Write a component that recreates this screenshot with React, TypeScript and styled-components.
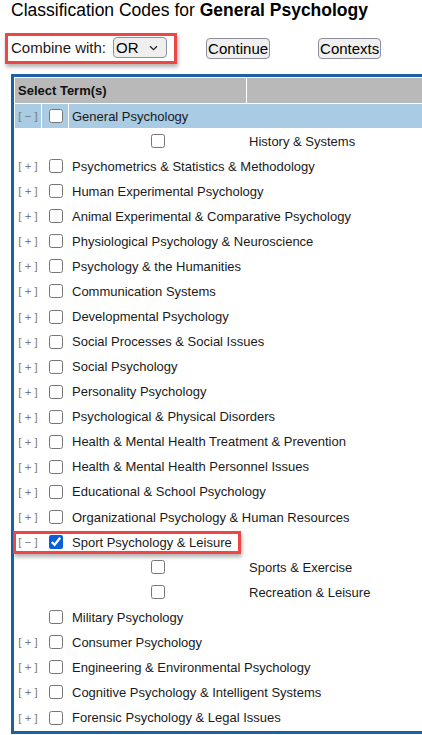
import styled, { createGlobalStyle } from "styled-components";

const GlobalStyle = createGlobalStyle`
  html, body {
    margin: 0;
    padding: 0;
    overflow: hidden;
    background: #ffffff;
  }
  body {
    font-family: "Liberation Sans", Arial, sans-serif;
    color: #000000;
  }
`;

type Term = {
  label: string;
  toggle?: "+" | "-";
  child?: boolean;
  checked?: boolean;
  current?: boolean;
  marked?: boolean;
};

const terms: Term[] = [
  { label: "General Psychology", toggle: "-", current: true },
  { label: "History & Systems", child: true },
  { label: "Psychometrics & Statistics & Methodology", toggle: "+" },
  { label: "Human Experimental Psychology", toggle: "+" },
  { label: "Animal Experimental & Comparative Psychology", toggle: "+" },
  { label: "Physiological Psychology & Neuroscience", toggle: "+" },
  { label: "Psychology & the Humanities", toggle: "+" },
  { label: "Communication Systems", toggle: "+" },
  { label: "Developmental Psychology", toggle: "+" },
  { label: "Social Processes & Social Issues", toggle: "+" },
  { label: "Social Psychology", toggle: "+" },
  { label: "Personality Psychology", toggle: "+" },
  { label: "Psychological & Physical Disorders", toggle: "+" },
  { label: "Health & Mental Health Treatment & Prevention", toggle: "+" },
  { label: "Health & Mental Health Personnel Issues", toggle: "+" },
  { label: "Educational & School Psychology", toggle: "+" },
  { label: "Organizational Psychology & Human Resources", toggle: "+" },
  { label: "Sport Psychology & Leisure", toggle: "-", checked: true, marked: true },
  { label: "Sports & Exercise", child: true },
  { label: "Recreation & Leisure", child: true },
  { label: "Military Psychology" },
  { label: "Consumer Psychology", toggle: "+" },
  { label: "Engineering & Environmental Psychology", toggle: "+" },
  { label: "Cognitive Psychology & Intelligent Systems", toggle: "+" },
  { label: "Forensic Psychology & Legal Issues", toggle: "+" },
];

export default function App() {
  return (
    <>
      <GlobalStyle />
      <Title>
        Classification Codes for <b>General Psychology</b>
      </Title>
      <Toolbar>
        <MarkBox>
          <span>Combine with:</span>
          <SelectWrap>
            <Select defaultValue="OR">
              <option value="OR">OR</option>
              <option value="AND">AND</option>
            </Select>
            <Chevron width="9" height="6" viewBox="0 0 9 6">
              <path d="M1 1.2 L4.5 4.6 L8 1.2" fill="none" stroke="#222" strokeWidth="1.3" />
            </Chevron>
          </SelectWrap>
        </MarkBox>
        <ToolButton $offset={29}>Continue</ToolButton>
        <ToolButton $offset={48}>Contexts</ToolButton>
      </Toolbar>
      <TermTable>
        <HeaderRow>
          <HeaderCell $span={3}>Select Term(s)</HeaderCell>
          <HeaderCell />
        </HeaderRow>
        {terms.map((term) => (
          <Row key={term.label}>
            {term.child ? (
              <>
                <Cell />
                <Cell />
                <Cell $center>
                  <Box type="checkbox" />
                </Cell>
                <Label $pad={2}>{term.label}</Label>
              </>
            ) : (
              <>
                <Cell $current={term.current} $center>
                  {term.toggle && (
                    <Toggle>[ {term.toggle === "+" ? "+" : "\u2212"} ]</Toggle>
                  )}
                </Cell>
                <Cell $current={term.current} $center>
                  <Box type="checkbox" defaultChecked={term.checked} />
                </Cell>
                <Label $current={term.current} $span={2} $pad={3}>
                  {term.label}
                </Label>
              </>
            )}
            {term.marked && <RowMark />}
          </Row>
        ))}
      </TermTable>
    </>
  );
}

const Title = styled.h1`
  margin: 0 0 0 11px;
  font-size: 17.5px;
  line-height: 20px;
  font-weight: 400;
  white-space: nowrap;

  b {
    font-weight: 700;
  }
`;

const Toolbar = styled.div`
  display: flex;
  align-items: center;
  margin: 13px 0 0 5px;
  font-size: 15px;
`;

const MarkBox = styled.div`
  display: inline-flex;
  align-items: center;
  gap: 7px;
  padding: 1px 7px 3px 3px;
  border: 3px solid #ee4646;
  box-shadow: 1px 3px 4px rgba(0, 0, 0, 0.3);
  color: #1a1a1a;
`;

const SelectWrap = styled.span`
  position: relative;
  display: inline-flex;
`;

const Select = styled.select`
  appearance: none;
  width: 54px;
  height: 21px;
  margin: 0;
  padding: 0 0 0 2px;
  font-family: "Liberation Sans", Arial, sans-serif;
  font-size: 15px;
  color: #000000;
  background: #efefef;
  border: 1px solid #8f8f9d;
  border-radius: 4px;
`;

const Chevron = styled.svg`
  position: absolute;
  right: 9px;
  top: 8px;
  pointer-events: none;
`;

const ToolButton = styled.button<{ $offset: number }>`
  height: 21px;
  margin: 0 0 0 ${(p) => p.$offset}px;
  padding: 0 1px;
  font-family: "Liberation Sans", Arial, sans-serif;
  font-size: 15px;
  color: #000000;
  background: #efefef;
  border: 1px solid #8f8f9d;
  border-radius: 4px;
`;

const TermTable = styled.div`
  display: flex;
  flex-direction: column;
  gap: 1px;
  width: 470px;
  margin: 10px 0 0 11px;
  padding: 1px;
  border: 3px solid #1a62a4;
  background: #ffffff;
`;

const HeaderRow = styled.div`
  display: grid;
  grid-template-columns: 26px 26px 177px 1fr;
  column-gap: 1px;
  height: 25px;
`;

const HeaderCell = styled.div<{ $span?: number }>`
  grid-column: span ${(p) => p.$span ?? 1};
  display: flex;
  align-items: center;
  padding-left: 3px;
  background: #b9b9b9;
  font-size: 13px;
  font-weight: 700;
  color: #111111;
`;

const Row = styled.div`
  position: relative;
  display: grid;
  grid-template-columns: 26px 26px 177px 1fr;
  column-gap: 1px;
  height: 24.07px;
`;

const Cell = styled.div<{ $current?: boolean; $center?: boolean }>`
  display: flex;
  align-items: center;
  justify-content: ${(p) => (p.$center ? "center" : "flex-start")};
  background: ${(p) => (p.$current ? "#a9cbe3" : "transparent")};
`;

const Label = styled.div<{ $current?: boolean; $span?: number; $pad: number }>`
  grid-column: span ${(p) => p.$span ?? 1};
  display: flex;
  align-items: center;
  padding-left: ${(p) => p.$pad}px;
  background: ${(p) => (p.$current ? "#a9cbe3" : "transparent")};
  font-size: 13px;
  color: #1a1a1a;
  white-space: nowrap;
`;

const Toggle = styled.span`
  font-size: 11.5px;
  color: #7a7a7a;
  white-space: pre;
`;

const Box = styled.input`
  width: 14px;
  height: 14px;
  margin: 0 0 0 1px;
  accent-color: #0b5fd8;
`;

const RowMark = styled.span`
  position: absolute;
  left: -2px;
  top: 1px;
  width: 228px;
  height: 23px;
  box-sizing: border-box;
  border: 3px solid #ee4646;
  box-shadow: 1px 3px 4px rgba(0, 0, 0, 0.3);
  pointer-events: none;
`;
